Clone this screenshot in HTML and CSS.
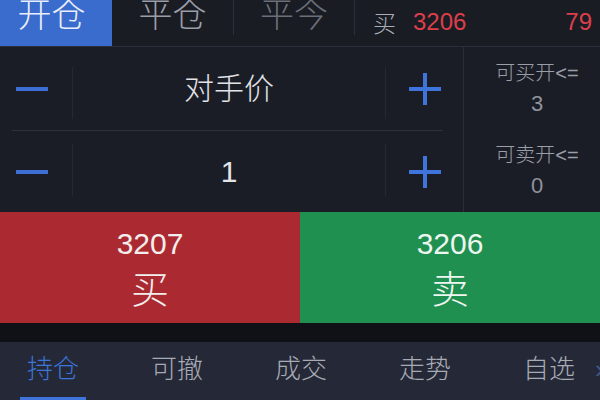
FILE: index.html
```html
<!DOCTYPE html>
<html lang="zh-CN">
<head>
<meta charset="utf-8">
<link rel="stylesheet" href="styles.css">
</head>
<body>
<div class="app">
  <div class="topbar">
    <div class="tab tab-active">开仓</div>
    <div class="tab">平仓</div>
    <div class="vdiv"></div>
    <div class="tab tab-dim">平今</div>
    <div class="vdiv"></div>
    <div class="quote">
      <span class="q-label">买</span>
      <span class="q-price">3206</span>
      <span class="q-vol">79</span>
    </div>
  </div>

  <div class="order">
    <div class="controls">
      <div class="row row-first">
        <div class="cell-minus">
          <svg class="icon" width="32" height="32" viewBox="0 0 32 32"><path d="M0 16H32" stroke="#3c6ed3" stroke-width="4"/></svg>
        </div>
        <div class="cell-div"></div>
        <div class="cell-value">对手价</div>
        <div class="cell-div"></div>
        <div class="cell-plus">
          <svg class="icon" width="32" height="32" viewBox="0 0 32 32"><path d="M0 16H32M16 0V32" stroke="#3f74dc" stroke-width="4"/></svg>
        </div>
      </div>
      <div class="hsep"></div>
      <div class="row row-second">
        <div class="cell-minus">
          <svg class="icon" width="32" height="32" viewBox="0 0 32 32"><path d="M0 16H32" stroke="#3c6ed3" stroke-width="4"/></svg>
        </div>
        <div class="cell-div"></div>
        <div class="cell-value">1</div>
        <div class="cell-div"></div>
        <div class="cell-plus">
          <svg class="icon" width="32" height="32" viewBox="0 0 32 32"><path d="M0 16H32M16 0V32" stroke="#3f74dc" stroke-width="4"/></svg>
        </div>
      </div>
    </div>
    <div class="limits">
      <div class="limit limit-first">
        <div class="limit-label">可买开&lt;=</div>
        <div class="limit-value">3</div>
      </div>
      <div class="limit">
        <div class="limit-label">可卖开&lt;=</div>
        <div class="limit-value">0</div>
      </div>
    </div>
  </div>

  <div class="actions">
    <div class="action action-buy">
      <div class="action-price">3207</div>
      <div class="action-label">买</div>
    </div>
    <div class="action action-sell">
      <div class="action-price">3206</div>
      <div class="action-label">卖</div>
    </div>
  </div>

  <div class="gap"></div>

  <div class="bottom">
    <div class="bottom-tabs">
      <div class="btab btab-active">持仓</div>
      <div class="btab">可撤</div>
      <div class="btab">成交</div>
      <div class="btab">走势</div>
      <div class="btab">自选</div>
    </div>
    <div class="more">»</div>
  </div>
</div>
</body>
</html>
```

FILE: styles.css
```css
* { box-sizing: border-box; }

html, body {
  margin: 0;
  padding: 0;
  background: #1b1d26;
}

body {
  font-family: "Liberation Sans", "Noto Sans CJK SC", sans-serif;
  font-weight: 300;
  width: 600px;
  height: 400px;
  overflow: hidden;
}

.app {
  width: 600px;
  height: 400px;
  display: flex;
  flex-direction: column;
  overflow: hidden;
  background: #1b1d26;
}

/* ---------- top bar ---------- */
.topbar {
  height: 47px;
  flex: none;
  display: flex;
  align-items: flex-start;
  background: #1a1c24;
  border-bottom: 1px solid #2b2e39;
}

.tab {
  height: 46px;
  font-size: 34px;
  line-height: 31px;
  text-align: center;
  color: #9a9ea7;
  width: 121px;
  flex: none;
}

.tab-active {
  width: 112px;
  background: #3a6cce;
  color: #e9eefa;
  padding-right: 9px;
}

.tab-dim {
  width: 120px;
  color: #6b6f79;
}

.vdiv {
  width: 1px;
  height: 35px;
  flex: none;
  background: #2c2f3a;
}

.quote {
  flex: 1;
  display: flex;
  align-items: center;
  height: 44px;
  padding-left: 18px;
  padding-right: 8px;
}

.q-label {
  font-size: 23px;
  color: #a9adb5;
  margin-right: 17px;
}

.q-price {
  font-size: 24px;
  color: #dc3f4b;
}

.q-vol {
  font-size: 24px;
  color: #dc3f4b;
  margin-left: auto;
}

/* ---------- order area ---------- */
.order {
  height: 165px;
  flex: none;
  display: flex;
  background: #1b1d26;
}

.controls {
  width: 463px;
  flex: none;
  display: flex;
  flex-direction: column;
}

.row {
  display: flex;
  align-items: center;
}

.row-first { height: 83px; }
.row-second { height: 81px; }

.hsep {
  height: 1px;
  margin: 0 20px 0 12px;
  background: #2e313c;
}

.cell-minus {
  width: 72px;
  flex: none;
  padding-left: 16px;
  display: flex;
  align-items: center;
}

.cell-div {
  width: 1px;
  height: 52px;
  flex: none;
  background: #262933;
}

.row-first .cell-div { margin-top: 8px; }
.row-second .cell-div { margin-top: -4px; }

.cell-value {
  flex: 1;
  text-align: center;
  font-size: 30px;
  color: #e2e4e8;
  line-height: 40px;
}

.cell-plus {
  width: 77px;
  flex: none;
  display: flex;
  justify-content: center;
  align-items: center;
}

.icon { display: block; }

.limits {
  flex: 1;
  border-left: 1px solid #2a2d38;
  display: flex;
  flex-direction: column;
}

.limit {
  flex: 1;
  display: flex;
  flex-direction: column;
  justify-content: center;
  align-items: center;
  padding-left: 10px;
}

.limit-first { height: 83px; flex: none; }

.limit-label {
  font-size: 20px;
  line-height: 30px;
  color: #9a9ea6;
  white-space: nowrap;
}

.limit-value {
  font-size: 22px;
  line-height: 32px;
  color: #8f939b;
}

/* ---------- buy / sell ---------- */
.actions {
  height: 111px;
  flex: none;
  display: flex;
}

.action {
  width: 300px;
  flex: none;
  display: flex;
  flex-direction: column;
  align-items: center;
  padding-top: 14px;
  color: #f3eded;
}

.action-buy { background: #ab2a31; }
.action-sell { background: #1f9050; color: #eef6f0; }

.action-price {
  font-size: 30px;
  line-height: 36px;
}

.action-label {
  font-size: 38px;
  line-height: 56px;
}

.gap {
  height: 19px;
  flex: none;
  background: #0f1117;
}

/* ---------- bottom tabs ---------- */
.bottom {
  flex: 1;
  display: flex;
  align-items: flex-start;
  background: #242837;
}

.bottom-tabs {
  display: flex;
  gap: 72px;
  padding-left: 27px;
}

.btab {
  font-size: 26px;
  line-height: 54px;
  color: #a7abb4;
  white-space: nowrap;
}

.btab-active {
  color: #3d75d8;
}

.btab-active::after {
  content: "";
  display: block;
  height: 3px;
  margin: 1px -7px 0;
  background: #3f74dc;
}

.more {
  margin-left: 20px;
  font-size: 26px;
  line-height: 54px;
  color: #4d6ea8;
  opacity: 0.7;
}
```
